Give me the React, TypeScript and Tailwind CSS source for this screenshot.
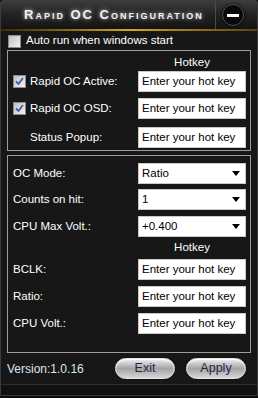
import React from "react";

const font = "font-['Liberation_Sans',Arial,sans-serif]";

const Check = ({ checked }: { checked?: boolean }) => (
  <span className="w-[13px] h-[13px] shrink-0 border border-[#8a8a8a] bg-gradient-to-br from-[#c0c0c0] to-[#f4f4f4] flex items-center justify-center">
    {checked && (
      <svg width="9" height="9" viewBox="0 0 9 9">
        <path d="M1 4.5 L3.5 7 L8 1" fill="none" stroke="#3d5fb0" strokeWidth="1.8" />
      </svg>
    )}
  </span>
);

const HotInput = () => (
  <div className="w-[108px] h-[21px] bg-white border border-[#c9c9c9] flex items-center pl-[3px] text-black text-[11.5px]">
    Enter your hot key
  </div>
);

const Select = ({ value }: { value: string }) => (
  <div className="w-[108px] h-[21px] bg-white border border-[#c9c9c9] flex items-center pl-[3px] pr-[5px] text-black text-[11.5px]">
    <span className="flex-1">{value}</span>
    <svg width="8" height="5" viewBox="0 0 8 5">
      <path d="M0 0 H8 L4 5 Z" fill="#000" />
    </svg>
  </div>
);

const Row = ({
  label,
  children,
  check,
  indent,
  top,
}: {
  label: string;
  children: React.ReactNode;
  check?: boolean;
  indent?: string;
  top: string;
}) => (
  <div className={`flex items-center h-[21px] pr-[4px] ${top}`}>
    <div className={`flex items-center flex-1 gap-[4px] ${indent ?? "pl-[5px]"}`}>
      {check ? <Check checked /> : null}
      <span>{label}</span>
    </div>
    {children}
  </div>
);

const HotkeyLabel = ({ top }: { top: string }) => (
  <div className={`flex h-[14px] pr-[4px] ${top}`}>
    <div className="flex-1" />
    <div className="w-[108px] text-center leading-[14px]">Hotkey</div>
  </div>
);

const Button = ({ label }: { label: string }) => (
  <div className="w-[60px] h-[21px] rounded-full border border-[#e6e6e6] bg-gradient-to-b from-[#f0f0f0] via-[#a4a4a4] to-[#d6d6d6] shadow-[0_0_2px_rgba(0,0,0,0.8),inset_0_1px_1px_#fff] flex items-center justify-center text-[12.5px] text-[#1c2a48]">
    {label}
  </div>
);

export default function App() {
  return (
    <div className={`w-[258px] h-[398px] bg-[#0c0c0c] ${font} text-white text-[11.5px] overflow-hidden`}>
      <div className="w-[258px] h-[396px] bg-[#171717] border border-[#3c3c3c] rounded-t-[3px] flex flex-col">
        {/* Title bar */}
        <div className="h-[28px] flex bg-gradient-to-b from-[#3c3c3c] via-[#222] to-[#141414]">
          <div className="w-[214px] flex items-center pl-[23px]">
            <span className="text-[13px] font-bold [font-variant:small-caps] tracking-[2px] text-[#f2f2f2] [text-shadow:0_0_4px_rgba(255,255,255,0.7)]">
              Rapid OC Configuration
            </span>
          </div>
          <div className="w-px bg-[#4a4a4a]" />
          <div className="flex-1 flex items-center pl-[6px]">
            <div className="w-[22px] h-[22px] rounded-full bg-[#080808] border border-[#505050] shadow-[0_0_3px_#000] flex items-center justify-center">
              <div className="w-[12px] h-[3px] bg-white" />
            </div>
          </div>
        </div>
        <div className="h-[2px] bg-gradient-to-r from-[#3a2c08] via-[#d8a820] to-[#5a4410]" />

        {/* Auto run */}
        <div className="flex items-center gap-[5px] pl-[7px] mt-[3px] h-[14px]">
          <Check />
          <span className="text-[11.5px]">Auto run when windows start</span>
        </div>

        {/* Panel 1 */}
        <div className="mx-[6px] mt-[2px] h-[101px] border border-[#9c9c9c]">
          <HotkeyLabel top="mt-[4px]" />
          <Row label="Rapid OC Active:" check top="mt-[2px]">
            <HotInput />
          </Row>
          <Row label="Rapid OC OSD:" check top="mt-[6px]">
            <HotInput />
          </Row>
          <Row label="Status Popup:" indent="pl-[22px]" top="mt-[8px]">
            <HotInput />
          </Row>
        </div>

        {/* Panel 2 */}
        <div className="mx-[6px] mt-[4px] h-[198px] border border-[#9c9c9c]">
          <Row label="OC Mode:" top="mt-[7px]">
            <Select value="Ratio" />
          </Row>
          <Row label="Counts on hit:" top="mt-[5px]">
            <Select value="1" />
          </Row>
          <Row label="CPU Max Volt.:" top="mt-[6px]">
            <Select value="+0.400" />
          </Row>
          <HotkeyLabel top="mt-[3px]" />
          <Row label="BCLK:" top="mt-[5px]">
            <HotInput />
          </Row>
          <Row label="Ratio:" top="mt-[6px]">
            <HotInput />
          </Row>
          <Row label="CPU Volt.:" top="mt-[6px]">
            <HotInput />
          </Row>
        </div>

        {/* Footer */}
        <div className="flex items-center mt-[5px] h-[21px] pl-[6px] pr-[11px]">
          <span className="flex-1 text-[12px] text-[#dbe6f2]">Version:1.0.16</span>
          <div className="flex gap-[11px]">
            <Button label="Exit" />
            <Button label="Apply" />
          </div>
        </div>
        <div className="mt-[5px] h-px bg-[#2e2e2e]" />
        <div className="flex-1 bg-[#111]" />
      </div>
    </div>
  );
}
